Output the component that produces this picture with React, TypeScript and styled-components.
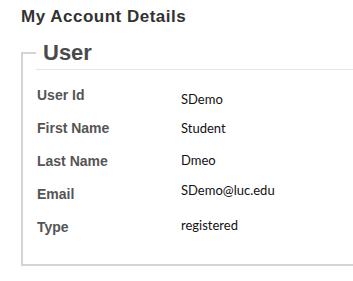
import styled, { createGlobalStyle } from "styled-components";

const GlobalStyle = createGlobalStyle`
  html, body {
    margin: 0;
    padding: 0;
    background: #fff;
    overflow: hidden;
  }
`;

type Detail = { label: string; value: string; nudge: number };

const details: Detail[] = [
  { label: "User Id", value: "SDemo", nudge: 4 },
  { label: "First Name", value: "Student", nudge: 0 },
  { label: "Last Name", value: "Dmeo", nudge: -1 },
  { label: "Email", value: "SDemo@luc.edu", nudge: -4 },
  { label: "Type", value: "registered", nudge: -2 },
];

export default function App() {
  return (
    <Page>
      <GlobalStyle />
      <Title>My Account Details</Title>
      <Box>
        <Legend>User</Legend>
        <Rows>
          {details.map((d) => (
            <Row key={d.label}>
              <Label>{d.label}</Label>
              <Value nudge={d.nudge}>{d.value}</Value>
            </Row>
          ))}
        </Rows>
      </Box>
    </Page>
  );
}

const Page = styled.div`
  padding: 7px 0 0 21px;
  font-family: "Liberation Sans", Arial, sans-serif;
  width: 332px;
`;

const Title = styled.h2`
  margin: 0 0 9px 0;
  font-size: 17px;
  line-height: 20px;
  font-weight: 700;
  letter-spacing: 0.5px;
  color: #333;
`;

const Box = styled.fieldset`
  margin: 0 -30px 0 0;
  box-sizing: border-box;
  padding: 0 0 27px 13px;
  border: 2px solid #d4d4d4;
`;

const Legend = styled.legend`
  display: block;
  width: 100%;
  box-sizing: border-box;
  padding: 0 0 0 7px;
  margin: 0;
  font-size: 22px;
  line-height: 33px;
  font-weight: 700;
  color: #4a4a4a;
  border-bottom: 1px solid #e5e5e5;
`;

const Rows = styled.div`
  display: flex;
  flex-direction: column;
  gap: 13px;
  padding: 15px 0 0 1px;
`;

const Row = styled.div`
  display: grid;
  grid-template-columns: 144px 1fr;
  align-items: start;
  height: 20px;
`;

const Label = styled.div`
  font-size: 14px;
  line-height: 20px;
  font-weight: 700;
  color: #555;
`;

const Value = styled.div<{ nudge: number }>`
  margin-top: ${(p) => p.nudge}px;
  font-family: Lato, "Noto Sans", sans-serif;
  font-size: 13px;
  line-height: 20px;
  color: #111;
`;
